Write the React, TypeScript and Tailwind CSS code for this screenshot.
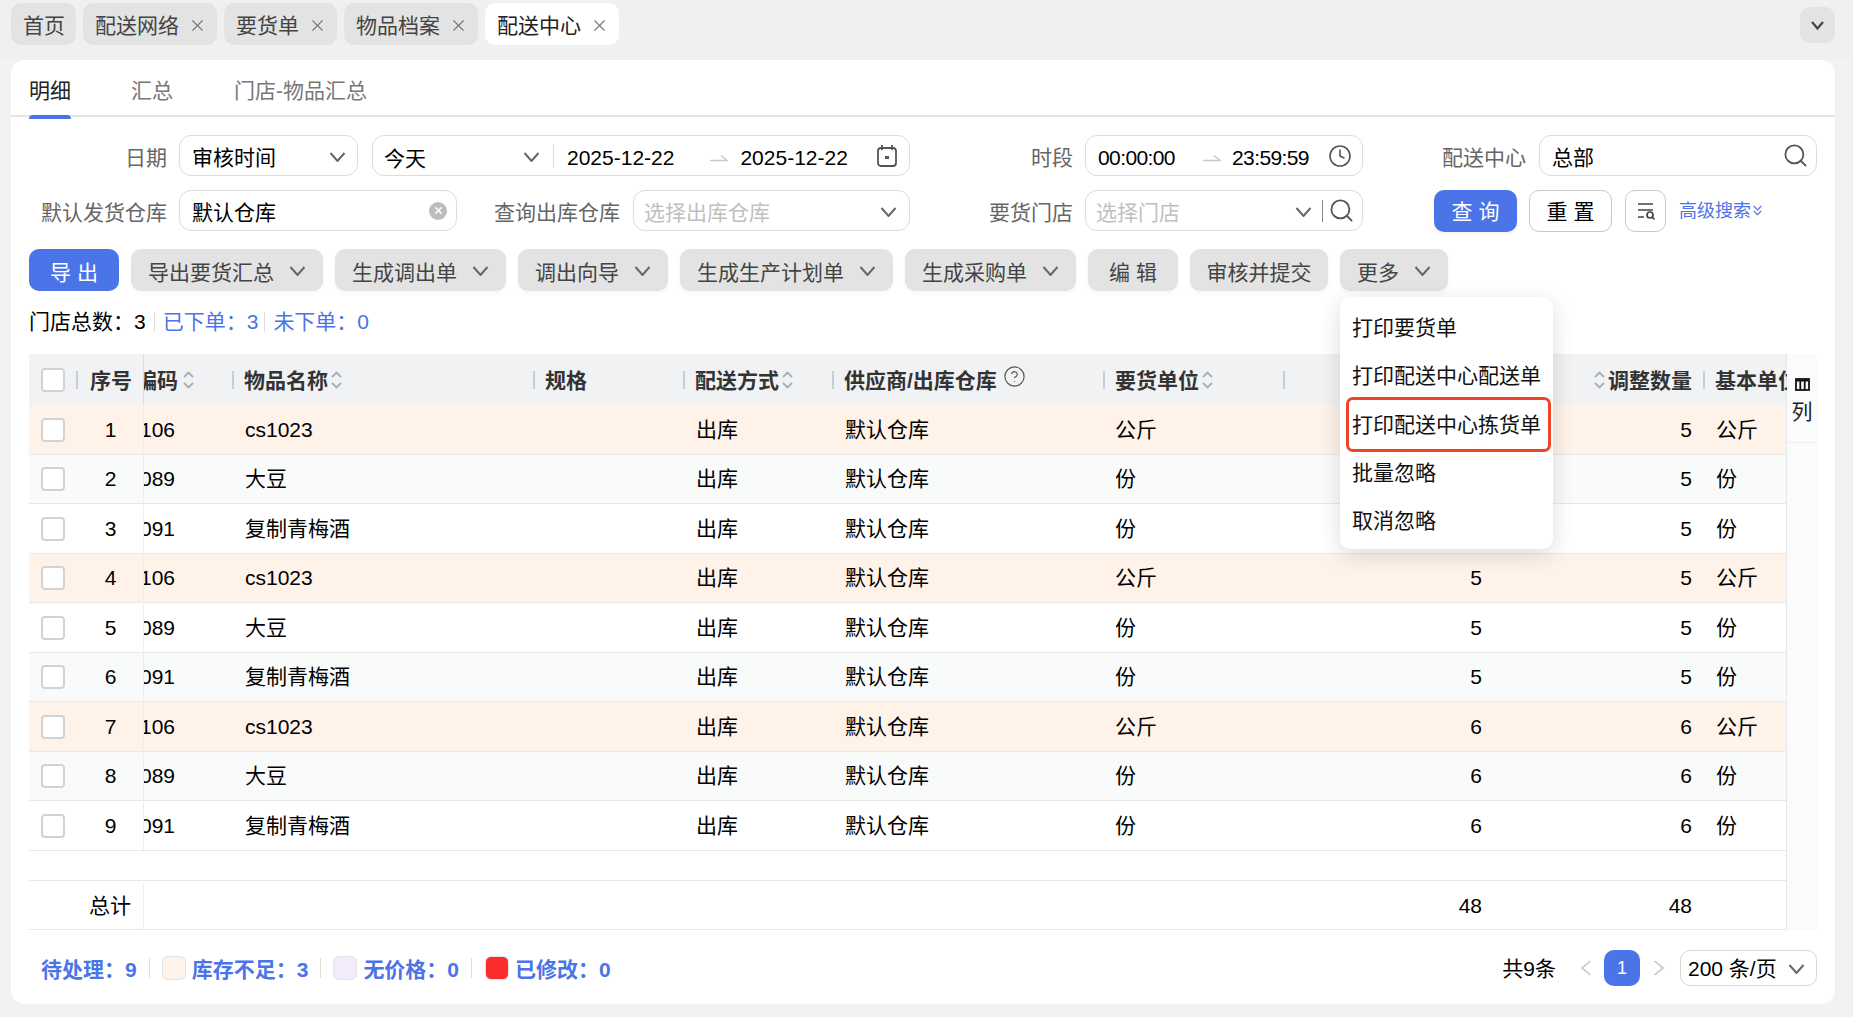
import React from "react";
import { ChevronsDown, CircleHelp, Clock, Search, X } from "lucide-react";

const Sep = () => <span className="w-[2px] h-[18px] bg-[#c9ced6] shrink-0" />;

const Sort = () => (
  <svg width="13" height="18" viewBox="0 0 13 18" fill="none" stroke="#a9adb3" strokeWidth="1.8" className="shrink-0">
    <path d="M2 6 L6.5 1.5 L11 6" />
    <path d="M2 12 L6.5 16.5 L11 12" />
  </svg>
);

const RangeArrow = () => (
  <svg width="18" height="10" viewBox="0 0 18 10" fill="none" stroke="#c9c9c9" strokeWidth="1.5" className="shrink-0 mt-[4px]">
    <path d="M0 7.5 H17 L11 2.5" />
  </svg>
);

const Chev = ({ c = "#666" }: { c?: string }) => (
  <svg width="17" height="10" viewBox="0 0 17 10" fill="none" stroke={c} strokeWidth="2" className="shrink-0 mt-[2px]">
    <path d="M1.5 1 L8.5 9 L15.5 1" />
  </svg>
);

const Box = ({ w, children, extra = "" }: { w: string; children: React.ReactNode; extra?: string }) => (
  <div className={`${w} ${extra} h-[41px] shrink-0 border border-[#dcdcdc] rounded-[12px] bg-white flex items-center`}>{children}</div>
);

const Tab = ({ t, active, close = true }: { t: string; active?: boolean; close?: boolean }) => (
  <div className={`h-[42px] rounded-[10px] flex items-center pl-[12px] ${close ? "pr-[10px]" : "pr-[11px]"} gap-[9px] ${active ? "bg-white text-[#222]" : "bg-[#e3e3e3] text-[#444]"}`}>
    <span className="pt-[4px]">{t}</span>
    {close && <X size={19} strokeWidth={1.4} color="#777" className="mt-[2px]" />}
  </div>
);

const Action = ({ t }: { t: string }) => (
  <div className="h-[42px] rounded-[10px] bg-[#e3e3e3] text-[#444] flex items-center pl-[17px] pr-[17px] gap-[15px] shadow-[0_2px_4px_rgba(0,0,0,0.04)]">
    <span className="whitespace-nowrap pt-[5px]">{t}</span>
    <Chev />
  </div>
);

const Plain = ({ t, w }: { t: string; w: string }) => (
  <div className={`${w} h-[42px] rounded-[10px] bg-[#e3e3e3] text-[#444] flex items-center justify-center whitespace-pre pt-[5px] shadow-[0_2px_4px_rgba(0,0,0,0.04)]`}>{t}</div>
);

const Check = () => <span className="w-[24px] h-[24px] border-2 border-[#d2d2d2] rounded-[4px] bg-white shrink-0" />;

const grid = "grid grid-cols-[47px_68px_88px_301px_150px_149px_271px_180px_210px_210px_84px]";

type Row = { n: number; c: string; name: string; unit: string; q: number; tint: string };
const products = [
  { c: "100106", name: "cs1023", unit: "公斤" },
  { c: "100089", name: "大豆", unit: "份" },
  { c: "100091", name: "复制青梅酒", unit: "份" },
];
const rows: Row[] = Array.from({ length: 9 }, (_, i) => {
  const p = products[i % 3];
  return {
    n: i + 1,
    ...p,
    q: i < 6 ? 5 : 6,
    tint: i % 3 === 0 ? "bg-[#fff2e8]" : i % 2 === 1 ? "bg-[#f9fbfa]" : "bg-white",
  };
});

const HeadCell = ({ t, sort, help }: { t: string; sort?: boolean; help?: boolean }) => (
  <div className="flex items-center min-w-0 overflow-hidden">
    <Sep />
    <span className="ml-[10px] pt-[2px] font-bold text-[#333] whitespace-nowrap">{t}</span>
    {sort && <span className="ml-[2px] flex"><Sort /></span>}
    {help && <CircleHelp size={23} strokeWidth={1.2} color="#555" className="ml-[6px] -mt-[6px] shrink-0" />}
  </div>
);

const Legend = ({ swatch, t }: { swatch: string; t: string }) => (
  <div className="flex items-center">
    <span className={`w-[24px] h-[24px] rounded-[6px] border border-[#e4e4e4] ${swatch}`} />
    <span className="ml-[6px] pt-[4px] font-bold text-[#4a74e8] whitespace-nowrap">{t}</span>
  </div>
);

export default function App() {
  return (
    <div className="w-[1853px] h-[1017px] overflow-hidden bg-[#f1f2f4] text-[21px] leading-[28px] text-black [font-family:'Liberation_Sans','Noto_Sans_CJK_SC',sans-serif]">
      {/* top tabs */}
      <div className="h-[60px] bg-[#f0f0f0] flex pl-[11px] pr-[18px] pt-[3px] items-start justify-between">
        <div className="flex gap-[7px]">
          <Tab t="首页" close={false} />
          <Tab t="配送网络" />
          <Tab t="要货单" />
          <Tab t="物品档案" />
          <Tab t="配送中心" active />
        </div>
        <div className="w-[35px] h-[36px] mt-[4px] rounded-[10px] bg-[#e3e3e3] flex items-center justify-center">
          <svg width="13" height="9" viewBox="0 0 13 9" fill="none" stroke="#444" strokeWidth="2.2"><path d="M1 1 L6.5 7.5 L12 1" /></svg>
        </div>
      </div>

      {/* card */}
      <div className="ml-[11px] mr-[18px] h-[944px] bg-white rounded-[14px] flex flex-col">
        <div className="h-[57px] border-b-2 border-[#e3e3e3] flex pl-[18px] gap-[60px] items-start pt-[17px] shrink-0">
          <div className="h-[40px] relative text-[#222]">
            明细
            <span className="absolute left-0 right-0 bottom-[-2px] h-[4px] rounded-t-[4px] bg-[#4a74e8]" />
          </div>
          <div className="text-[#777]">汇总</div>
          <div className="text-[#777] -ml-[-1px]">门店-物品汇总</div>
        </div>

        <div className="px-[18px] flex flex-col flex-1 min-h-0">
          {/* row 1 */}
          <div className="flex items-center mt-[18px] h-[41px]">
            <span className="w-[138px] text-right text-[#666] pt-[5px]">日期</span>
            <Box w="w-[179px]" extra="ml-[12px] pl-[12px] pr-[11px] justify-between">
              <span className="pt-[5px]">审核时间</span><Chev />
            </Box>
            <Box w="w-[538px]" extra="ml-[14px] pl-[11px] pr-[10px]">
              <span className="w-[139px] pt-[7px]">今天</span>
              <Chev />
              <span className="w-px h-[24px] bg-[#ddd] ml-[13px]" />
              <span className="ml-[13px] pt-[5px] whitespace-nowrap shrink-0">2025-12-22</span>
              <span className="ml-[36px]"><RangeArrow /></span>
              <span className="ml-[12px] pt-[5px] whitespace-nowrap shrink-0">2025-12-22</span>
              <svg width="22" height="24" viewBox="0 0 22 24" fill="none" stroke="#555" strokeWidth="1.8" className="ml-[28px] shrink-0">
                <rect x="2" y="4" width="18" height="18" rx="3" />
                <path d="M6 1v5M16 1v5" />
                <rect x="9" y="12" width="4" height="3" fill="#555" stroke="none" />
              </svg>
            </Box>
            <span className="w-[163px] text-right text-[#666] pt-[5px]">时段</span>
            <Box w="w-[278px]" extra="ml-[12px] pl-[12px] pr-[10px]">
              <span className="pt-[5px] w-[77px] tracking-[-0.6px] whitespace-nowrap">00:00:00</span>
              <span className="ml-[28px]"><RangeArrow /></span>
              <span className="ml-[11px] pt-[5px] w-[77px] tracking-[-0.6px] whitespace-nowrap">23:59:59</span>
              <Clock size={24} color="#555" strokeWidth={1.6} className="ml-[19px] shrink-0" />
            </Box>
            <span className="w-[163px] text-right text-[#666] pt-[5px]">配送中心</span>
            <Box w="w-[278px]" extra="ml-[13px] pl-[12px] pr-[7px] justify-between">
              <span className="pt-[5px]">总部</span>
              <Search size={27} color="#555" strokeWidth={1.6} />
            </Box>
          </div>

          {/* row 2 */}
          <div className="flex items-center mt-[14px] h-[41px]">
            <span className="w-[138px] text-right text-[#666] whitespace-nowrap pt-[5px]">默认发货仓库</span>
            <Box w="w-[278px]" extra="ml-[12px] pl-[12px] pr-[9px] justify-between">
              <span className="pt-[5px]">默认仓库</span>
              <span className="w-[18px] h-[18px] rounded-full bg-[#bdbdbd] flex items-center justify-center">
                <X size={11} color="#fff" strokeWidth={3.2} />
              </span>
            </Box>
            <span className="w-[163px] text-right text-[#666] whitespace-nowrap pt-[5px]">查询出库仓库</span>
            <Box w="w-[277px]" extra="ml-[13px] pl-[10px] pr-[12px] justify-between">
              <span className="text-[#bfbfbf] pt-[5px]">选择出库仓库</span><Chev />
            </Box>
            <span className="w-[163px] text-right text-[#666] pt-[5px]">要货门店</span>
            <Box w="w-[278px]" extra="ml-[12px] pl-[10px] pr-[7px]">
              <span className="text-[#bfbfbf] flex-1 pt-[5px]">选择门店</span>
              <Chev />
              <span className="w-px h-[22px] bg-[#888] ml-[10px]" />
              <Search size={27} color="#555" strokeWidth={1.6} className="ml-[5px]" />
            </Box>
            <div className="ml-[71px] w-[83px] h-[42px] rounded-[10px] bg-[#4a74e8] text-white flex items-center justify-center whitespace-pre pt-[3px] shadow-[0_2px_4px_rgba(0,0,0,0.06)]">查 询</div>
            <div className="ml-[12px] w-[83px] h-[42px] rounded-[10px] border border-[#c8c8c8] flex items-center justify-center whitespace-pre pt-[3px]">重 置</div>
            <div className="ml-[13px] w-[41px] h-[42px] rounded-[10px] border border-[#c8c8c8] flex items-center justify-center">
              <svg width="20" height="20" viewBox="0 0 20 20" fill="none" stroke="#444" strokeWidth="1.7">
                <path d="M2 3h15M2 9h15M2 16h6" />
                <circle cx="14" cy="14" r="3" />
                <path d="M16 16l2.5 2.5" />
              </svg>
            </div>
            <div className="ml-[13px] flex items-center text-[18px] text-[#4a74e8] whitespace-nowrap">
              高级搜索<ChevronsDown size={17} strokeWidth={1.6} className="-ml-[2px]" />
            </div>
          </div>

          {/* toolbar */}
          <div className="flex items-center gap-[12px] mt-[18px] h-[42px]">
            <div className="w-[90px] h-[42px] rounded-[10px] bg-[#4a74e8] text-white flex items-center justify-center whitespace-pre pt-[5px]">导 出</div>
            <Action t="导出要货汇总" />
            <Action t="生成调出单" />
            <Action t="调出向导" />
            <Action t="生成生产计划单" />
            <Action t="生成采购单" />
            <Plain t="编 辑" w="w-[90px]" />
            <Plain t="审核并提交" w="w-[138px]" />
            <div className="relative">
              <Action t="更多" />
              <div className="absolute z-10 left-0 top-[48px] w-[213px] h-[252px] bg-white rounded-[10px] shadow-[0_6px_22px_rgba(0,0,0,0.14)] flex flex-col pt-[7px] pl-[12px] text-[#111]">
                {["打印要货单", "打印配送中心配送单", "打印配送中心拣货单", "批量忽略", "取消忽略"].map((t) => (
                  <div key={t} className="h-[48.3px] flex items-center whitespace-nowrap">{t}</div>
                ))}
                <span className="absolute left-[6px] top-[100px] w-[205px] h-[55px] border-[3px] border-[#ee4528] rounded-[7px]" />
              </div>
            </div>
          </div>

          {/* stats */}
          <div className="flex items-center h-[28px] mt-[17px] whitespace-nowrap">
            <span>门店总数：3</span>
            <span className="w-px h-[20px] bg-[#ddd] ml-[8px] mr-[8px]" />
            <span className="text-[#4a74e8]">已下单：3</span>
            <span className="w-px h-[20px] bg-[#ddd] ml-[6px] mr-[8px]" />
            <span className="text-[#4a74e8]">未下单：0</span>
          </div>

          {/* table */}
          <div className="flex mt-[18px] h-[576px] shrink-0">
            <div className="w-[1758px] shrink-0 border-r border-[#e5e7eb] flex flex-col">
              <div className={`${grid} h-[51px] shrink-0 bg-[#f1f2f4] items-stretch`}>
                <div className="flex items-center pl-[12px]"><Check /></div>
                <div className="flex items-center border-r border-[#d8dbe0]">
                  <Sep />
                  <span className="ml-[12px] pt-[2px] font-bold text-[#333]">序号</span>
                </div>
                <div className="flex items-center justify-end pr-[37px] overflow-hidden">
                  <span className="font-bold text-[#333] whitespace-nowrap pt-[2px]">物品编码</span>
                  <span className="ml-[4px] flex"><Sort /></span>
                </div>
                <HeadCell t="物品名称" sort />
                <HeadCell t="规格" />
                <HeadCell t="配送方式" sort />
                <HeadCell t="供应商/出库仓库" help />
                <HeadCell t="要货单位" sort />
                <div className="flex items-center"><Sep /></div>
                <div className="flex items-center justify-end pr-[11px]">
                  <Sort />
                  <span className="ml-[2px] pt-[2px] font-bold text-[#333] whitespace-nowrap">调整数量</span>
                </div>
                <HeadCell t="基本单位" />
              </div>
              {rows.map((r) => (
                <div key={r.n} className={`${grid} h-[49.5px] shrink-0 pt-[1px] border-b border-[#e6e8ea] ${r.tint}`}>
                  <div className="flex items-center pl-[12px]"><Check /></div>
                  <div className="flex items-center justify-center pl-[2px] border-r border-[#eceef0]">{r.n}</div>
                  <div className="flex items-center justify-end pr-[57px] overflow-hidden"><span>{r.c}</span></div>
                  <div className="flex items-center pl-[13px]">{r.name}</div>
                  <div />
                  <div className="flex items-center pl-[13px]">出库</div>
                  <div className="flex items-center pl-[13px]">默认仓库</div>
                  <div className="flex items-center pl-[12px]">{r.unit}</div>
                  <div className="flex items-center justify-end pr-[11px]">{r.q}</div>
                  <div className="flex items-center justify-end pr-[11px]">{r.q}</div>
                  <div className="flex items-center pl-[13px]">{r.unit}</div>
                </div>
              ))}
              <div className="h-[30px] shrink-0 border-b border-[#e6e8ea]" />
              <div className={`${grid} h-[49.5px] shrink-0 pt-[2px] border-b border-[#e6e8ea]`}>
                <div />
                <div className="flex items-center justify-center pl-[1px] border-r border-[#eceef0]">总计</div>
                <div /><div /><div /><div /><div /><div />
                <div className="flex items-center justify-end pr-[11px] col-start-9">48</div>
                <div className="flex items-center justify-end pr-[11px]">48</div>
              </div>
            </div>
            <div className="w-[30px] shrink-0 bg-[#fafbfd]">
              <div className="h-[89px] border-b border-[#eceef0] flex flex-col items-center pt-[24px]">
                <svg width="15" height="13" viewBox="0 0 15 13" fill="none" stroke="#111" strokeWidth="1.8">
                  <rect x="1" y="1" width="13" height="11" />
                  <path d="M5.3 1v11M9.7 1v11M1 2.5h13" />
                </svg>
                <span className="mt-[9px] leading-[24px] text-[#222]">列</span>
              </div>
            </div>
          </div>

          {/* footer */}
          <div className="flex items-center justify-between h-[36px] mt-[20px] pl-[12px] whitespace-nowrap">
            <div className="flex items-center">
              <span className="font-bold text-[#4a74e8] pt-[4px]">待处理：9</span>
              <span className="w-px h-[20px] bg-[#ddd] ml-[12px] mr-[12px]" />
              <Legend swatch="bg-[#fff2e8]" t="库存不足：3" />
              <span className="w-px h-[20px] bg-[#ddd] ml-[12px] mr-[12px]" />
              <Legend swatch="bg-[#f1ebfb]" t="无价格：0" />
              <span className="w-px h-[20px] bg-[#ddd] ml-[12px] mr-[13px]" />
              <Legend swatch="bg-[#fb2c2c]" t="已修改：0" />
            </div>
            <div className="flex items-center">
              <span className="pt-[1px]">共9条</span>
              <svg width="12" height="16" viewBox="0 0 12 16" fill="none" stroke="#c4c4c4" strokeWidth="1.6" className="ml-[24px]"><path d="M10.5 1 L2 8 L10.5 15" /></svg>
              <span className="ml-[12px] w-[36px] h-[36px] rounded-[10px] bg-[#4a74e8] text-white text-[18px] flex items-center justify-center">1</span>
              <svg width="12" height="16" viewBox="0 0 12 16" fill="none" stroke="#c4c4c4" strokeWidth="1.6" className="ml-[13px]"><path d="M1.5 1 L10 8 L1.5 15" /></svg>
              <div className="ml-[15px] w-[137px] h-[36px] border border-[#d9d9d9] rounded-[10px] flex items-center justify-between pl-[7px] pr-[11px]">
                <span className="pt-[1px]">200 条/页</span>
                <Chev />
              </div>
            </div>
          </div>
        </div>
      </div>
    </div>
  );
}
